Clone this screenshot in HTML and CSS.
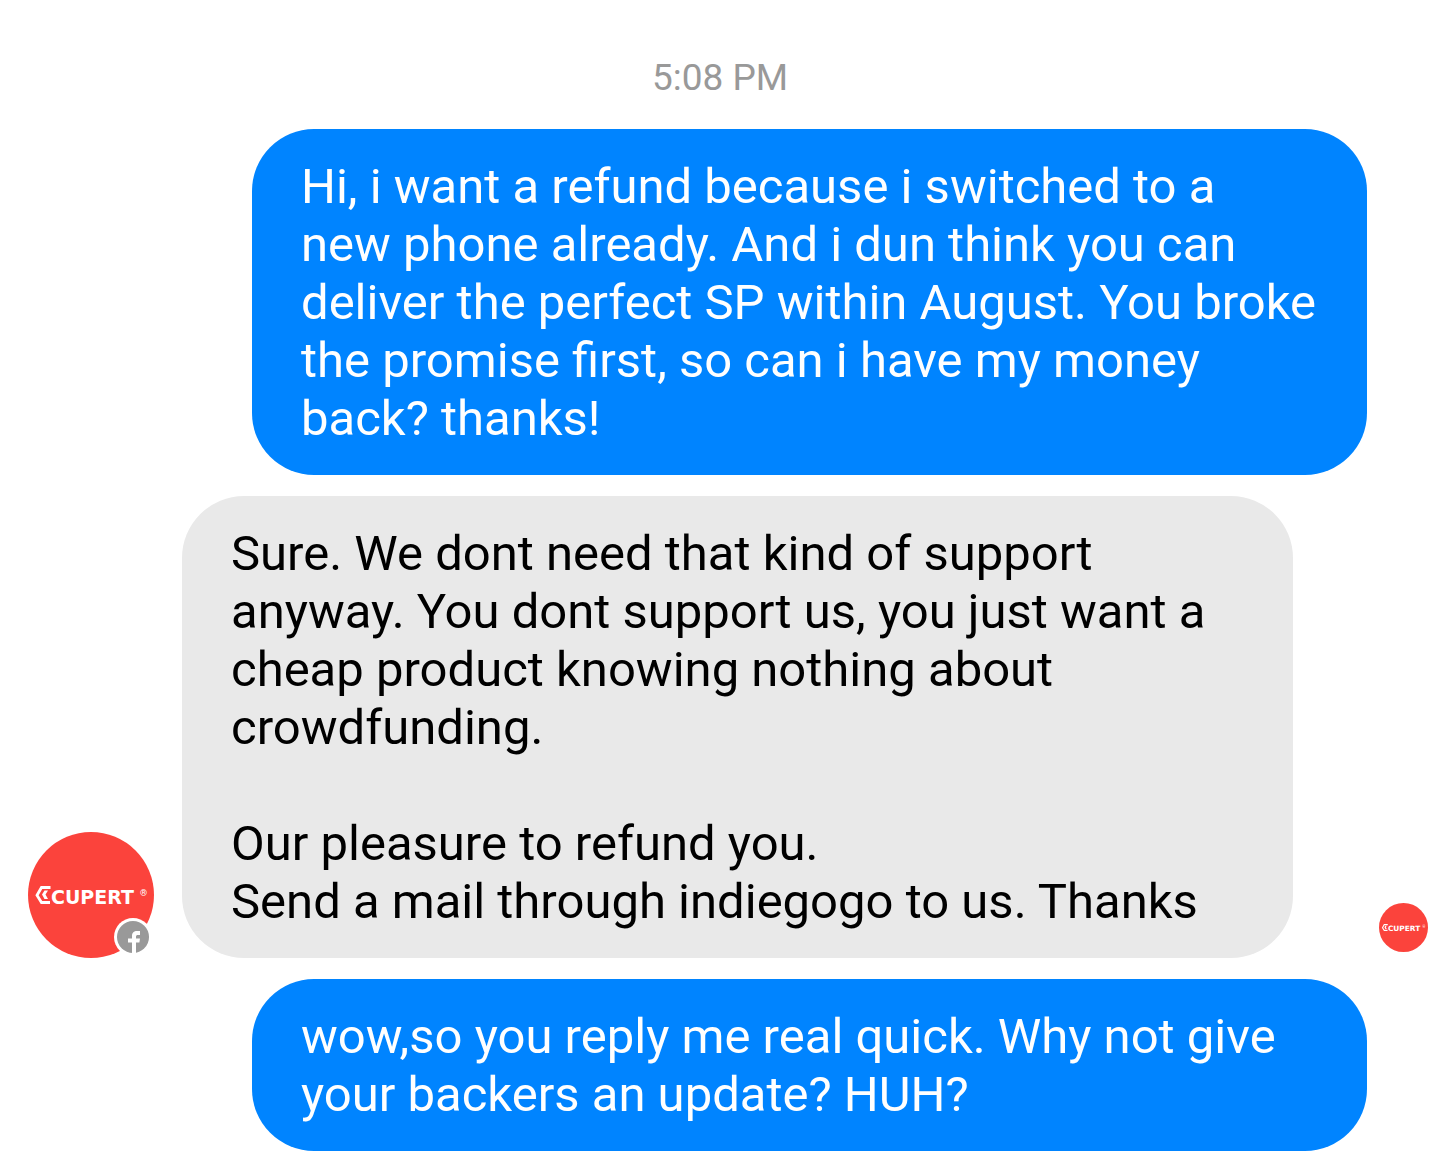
FILE: index.html
```html
<!doctype html>
<html lang="en">
<head>
    <meta charset="utf-8">
    <meta name="viewport" content="width=device-width, initial-scale=1">
    <title>Conversation</title>
    <link rel="stylesheet" href="styles.css">
</head>
<body>
    <main class="chat">
        <time class="time">5:08 PM</time>

        <div class="row sent">
            <p class="bubble">Hi, i want a refund because i switched to a<br>new phone already. And i dun think you can deliver the perfect SP within August. You broke the promise first, so can i have my money back? thanks!</p>
        </div>

        <div class="row received">
            <div class="avatar">
                <svg class="avatar-logo" viewBox="0 0 126 126" role="img" aria-label="Cupert">
                    <circle cx="63" cy="63" r="63" fill="#fb433c"/>
                    <path d="M22.500 55.500H13.500L9 63.300l4.500 7.200H22" fill="none" stroke="#fff" stroke-width="2.800"/>
                    <path d="M20 58.500h-3.500L14 62.500l2.500 4.500H20l-2.500-4.500z" fill="#fff"/>
                    <text x="23" y="72" class="logo-text">CUPERT</text>
                    <text x="112" y="64" class="logo-mark">®</text>
                </svg>
                <!-- Facebook badge -->
                <svg class="badge" viewBox="0 0 38 38" aria-hidden="true">
                    <circle cx="19" cy="19" r="19" fill="#fff"/>
                    <circle cx="19" cy="19" r="16" fill="#999"/>
                    <path d="M18 35V24.500h-4v-4h4V18c0-3.500 2-5 5-5h3v4h-2c-1.500 0-2 .5-2 2v1.500h4l-.6 4H22V35z" fill="#fff"/>
                </svg>
            </div>
            <p class="bubble">Sure. We dont need that kind of support anyway. You dont support us, you just want a cheap product knowing nothing about crowdfunding.<br><br>Our pleasure to refund you.<br>Send a mail through indiegogo to us. Thanks</p>
            <svg class="seen" viewBox="0 0 126 126" role="img" aria-label="Seen by Cupert">
                <circle cx="63" cy="63" r="63" fill="#fb433c"/>
                <path d="M22.500 55.500H13.500L9 63.300l4.500 7.200H22" fill="none" stroke="#fff" stroke-width="2.800"/>
                <path d="M20 58.500h-3.500L14 62.500l2.500 4.500H20l-2.500-4.500z" fill="#fff"/>
                <text x="23" y="72" class="logo-text">CUPERT</text>
                <text x="112" y="64" class="logo-mark">®</text>
            </svg>
        </div>

        <div class="row sent">
            <p class="bubble">wow,so you reply me real quick. Why not give your backers an update? HUH?</p>
        </div>
    </main>
</body>
</html>
```
FILE: styles.css
```css
body {
    margin: 0;
    background: #fff;
    font-family: Roboto, sans-serif;
}
.chat {
    display: flex;
    flex-direction: column;
    gap: 21px;
    padding: 48px 12px 15px 28px;
}
.time {
    padding: 8px 0;
    margin-right: 16px;
    color: #999;
    font-size: 37px;
    line-height: 44px;
    text-align: center;
}
.row { display: flex; align-items: flex-end; }
.bubble {
    box-sizing: border-box;
    flex: 1;
    margin: 0;
    padding: 29px 49px 27px;
    border-radius: 62px;
    font-size: 49px;
    line-height: 58px;
}
.sent { padding: 0 61px 0 224px; }
.sent .bubble { background: #0084ff; color: #fff; }
.received .bubble { background: #e9e9e9; color: #000; }
.avatar {
    position: relative;
    width: 126px;
    height: 126px;
    margin-right: 28px;
}
.avatar-logo { display: block; width: 126px; height: 126px; }
.badge {
    position: absolute;
    right: 2px;
    bottom: 2px;
    width: 38px;
    height: 38px;
}
.seen { width: 49px; height: 49px; margin: 0 0 6px 86px; }
.logo-text { fill: #fff; font: bold 19px "DejaVu Sans", sans-serif; }
.logo-mark { fill: #fff; font: 9px Roboto, sans-serif; }
```
